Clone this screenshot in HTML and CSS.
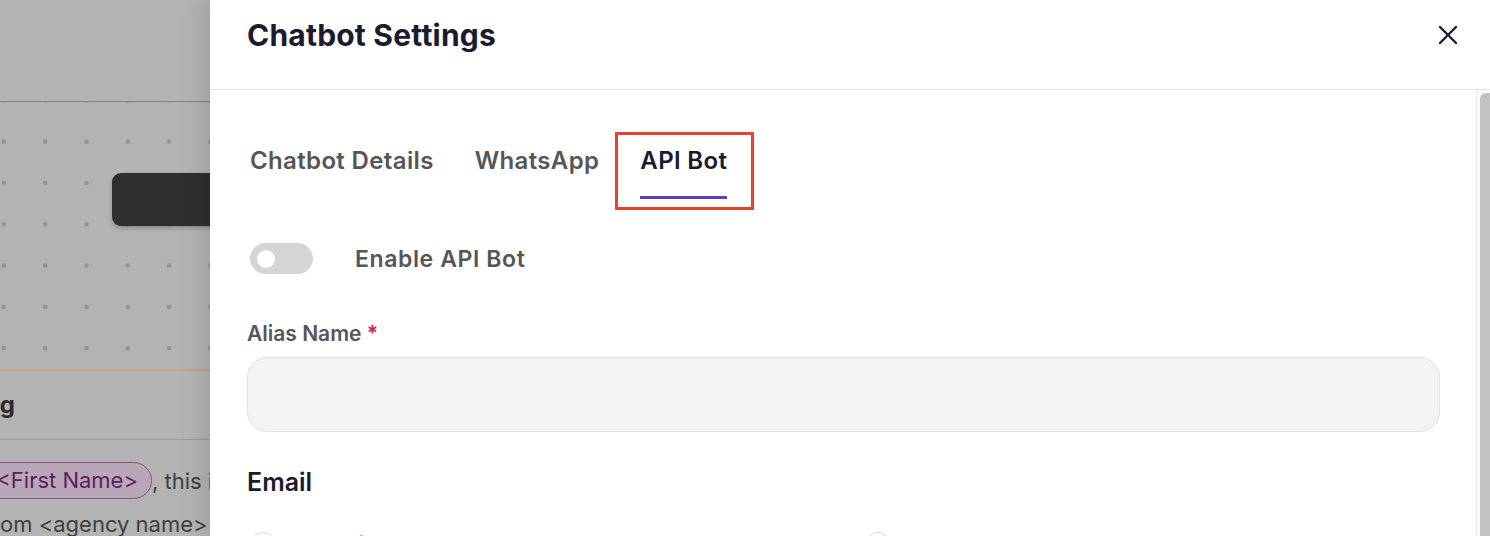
FILE: index.html
```html
<!DOCTYPE html>
<html lang="en">
<head>
  <meta charset="UTF-8" />
  <meta name="viewport" content="width=device-width, initial-scale=1" />
  <title>Chatbot Settings</title>
  <link rel="stylesheet" href="styles.css">
</head>
<body>

  <div class="screen">

    <!-- Затемнённый фон редактора -->
    <aside class="backdrop">
      <div class="bd-top"></div>
      <div class="bd-canvas">
        <div class="bd-node"></div>
      </div>
      <div class="bd-msg">
        <div class="bd-title"><span>Greeting</span></div>
        <div class="bd-line">
          <div class="cut"><span>Hi&nbsp;</span><span class="chip">&lt;First Name&gt;</span></div>
          <span>, this is a message</span>
        </div>
        <div class="bd-line">
          <div class="cut cut-zero"><span>fr</span></div>
          <span>om &lt;agency name&gt; team</span>
        </div>
      </div>
    </aside>

    <section class="drawer">
      <header class="drawer-head">
        <h2>Chatbot Settings</h2>
        <button class="close" aria-label="Close">
          <svg width="20" height="20" viewBox="0 0 20 20" fill="none" stroke="#1b1a2e" stroke-width="2.4" stroke-linecap="round">
            <path d="M2 2 L18 18 M18 2 L2 18" />
          </svg>
        </button>
      </header>

      <div class="drawer-body">
        <div class="drawer-content">
          <nav class="tabs">
            <a href="#" class="tab">Chatbot Details</a>
            <a href="#" class="tab">WhatsApp</a>
            <a href="#" class="tab active">API Bot<span class="mark"></span></a>
          </nav>

          <div class="toggle-row">
            <span class="toggle"><span class="knob"></span></span>
            <span class="toggle-label">Enable API Bot</span>
          </div>

          <label class="field-label" for="alias">Alias Name <span class="req">*</span></label>
          <input class="field-input" id="alias" type="text" />

          <h3 class="section-title">Email</h3>

          <div class="radio-row">
            <label class="radio"><span class="dot"></span>Use default</label>
            <label class="radio"><span class="dot"></span>Custom</label>
          </div>
        </div>

        <div class="scrollbar"><div class="thumb"></div></div>
      </div>
    </section>

  </div>

</body>
</html>
```

FILE: styles.css
```css
/* Общие стили */
body {
  margin: 0;
  font-family: 'Inter', 'Liberation Sans', sans-serif;
  background: #fff;
  overflow: hidden;
}

.screen {
  display: flex;
  height: 536px;
  overflow: hidden;
}

/* Фон под панелью */
.backdrop {
  width: 210px;
  flex-shrink: 0;
  overflow: hidden;
  background: #b3b3b3;
  display: flex;
  flex-direction: column;
}

.bd-top {
  height: 101px;
  flex-shrink: 0;
}

.bd-canvas {
  height: 270px;
  flex-shrink: 0;
  box-sizing: border-box;
  padding-top: 71px;
  border-top: 1px solid #828282;
  border-bottom: 2px solid #c6a27f;
  background-image: radial-gradient(circle, #939393 2px, transparent 2.6px);
  background-size: 41.3px 41.3px;
  background-position: -16.8px 19px;
}

.bd-node {
  margin-left: 112px;
  width: 140px;
  height: 53px;
  border-radius: 9px;
  background: #2f2f2f;
  box-shadow: 0 2px 4px rgba(0, 0, 0, 0.25);
}

.bd-msg {
  flex: 1;
}

.bd-title {
  height: 68px;
  display: flex;
  align-items: center;
  border-bottom: 1px solid #9b9b9b;
}

.bd-title span {
  display: flex;
  justify-content: flex-end;
  width: 15px;
  flex-shrink: 0;
  white-space: nowrap;
  font-size: 24px;
  font-weight: 700;
  color: #2b2b2b;
  padding-bottom: 2px;
}

.bd-line {
  display: flex;
  align-items: center;
  white-space: nowrap;
  font-size: 22px;
  color: #3f3f3f;
}

.bd-line:nth-child(2) {
  margin-top: 22px;
}

.bd-line:nth-child(3) {
  margin-top: 12px;
}

.cut {
  width: 152px;
  flex-shrink: 0;
  display: flex;
  justify-content: flex-end;
  align-items: center;
}

.cut-zero {
  width: 0;
}

.chip {
  flex-shrink: 0;
  padding: 4px 13px 5px 14px;
  border: 1px solid #8d4f8c;
  border-radius: 19px;
  background: #b8a8b7;
  color: #5e1d5e;
}

/* Панель настроек */
.drawer {
  flex: 1;
  background: #fff;
  display: flex;
  flex-direction: column;
  box-shadow: -6px 0 22px rgba(0, 0, 0, 0.13);
}

.drawer-head {
  height: 90px;
  flex-shrink: 0;
  box-sizing: border-box;
  border-bottom: 1px solid #e3e3e3;
  display: flex;
  justify-content: space-between;
  align-items: flex-start;
  padding: 17px 32px 0 37px;
}

.drawer-head h2 {
  margin: 0;
  font-size: 30px;
  line-height: 36px;
  font-weight: 700;
  color: #1b1a2e;
  letter-spacing: 0.2px;
}

.close {
  margin-top: 8px;
  padding: 0;
  border: none;
  background: none;
  width: 20px;
  height: 20px;
  cursor: pointer;
}

.drawer-body {
  flex: 1;
  display: flex;
  overflow: hidden;
}

.drawer-content {
  flex: 1;
  padding: 56px 36px 0 37px;
  display: flex;
  flex-direction: column;
}

.drawer-content > * {
  flex-shrink: 0;
}

/* Вкладки */
.tabs {
  display: flex;
  gap: 41px;
  padding-left: 3px;
}

.tab {
  position: relative;
  font-size: 24px;
  line-height: 29px;
  font-weight: 600;
  color: #565656;
  text-decoration: none;
  padding-bottom: 21px;
  border-bottom: 3px solid transparent;
  letter-spacing: 0.35px;
}

.tab.active {
  color: #1b1a2e;
  border-bottom-color: #5a3acb;
}

.mark {
  position: absolute;
  top: -14px;
  bottom: -14px;
  left: -25px;
  right: -27px;
  border: 3px solid #e8432a;
}

/* Переключатель */
.toggle-row {
  display: flex;
  align-items: center;
  gap: 42px;
  margin-top: 44px;
  padding-left: 3px;
}

.toggle {
  width: 63px;
  height: 31px;
  border-radius: 16px;
  background: #d5d5d5;
  display: flex;
  align-items: center;
  padding-left: 7px;
  box-sizing: border-box;
}

.knob {
  width: 18px;
  height: 18px;
  border-radius: 50%;
  background: #fff;
}

.toggle-label {
  font-size: 23px;
  font-weight: 600;
  color: #565656;
  letter-spacing: 0.6px;
}

/* Поля */
.field-label {
  margin-top: 47px;
  font-size: 21px;
  line-height: 25px;
  font-weight: 600;
  color: #565656;
}

.req {
  color: #c8234b;
}

.field-input {
  margin-top: 11px;
  height: 75px;
  box-sizing: border-box;
  border: 1px solid #e2e2e2;
  border-radius: 20px;
  background: #f3f3f3;
  font-family: inherit;
  font-size: 18px;
  padding: 0 20px;
}

.section-title {
  margin: 36px 0 0;
  font-size: 25px;
  line-height: 29px;
  font-weight: 600;
  color: #1b1a2e;
}

.radio-row {
  margin-top: 35px;
  display: grid;
  grid-template-columns: 1fr 1fr;
  gap: 36px;
}

.radio {
  display: flex;
  align-items: center;
  gap: 14px;
  padding-left: 4px;
  font-size: 20px;
  color: #565656;
}

.dot {
  width: 24px;
  height: 24px;
  border-radius: 50%;
  border: 1.5px solid #d8d8d8;
  box-sizing: border-box;
}

/* Полоса прокрутки */
.scrollbar {
  width: 14px;
  flex-shrink: 0;
  box-sizing: border-box;
  border-left: 1px solid #ececec;
  background: #fafafa;
  padding: 3px 0 0 3px;
}

.thumb {
  height: 600px;
  border-radius: 6px 0 0 0;
  background: #c2c2c2;
}
```
